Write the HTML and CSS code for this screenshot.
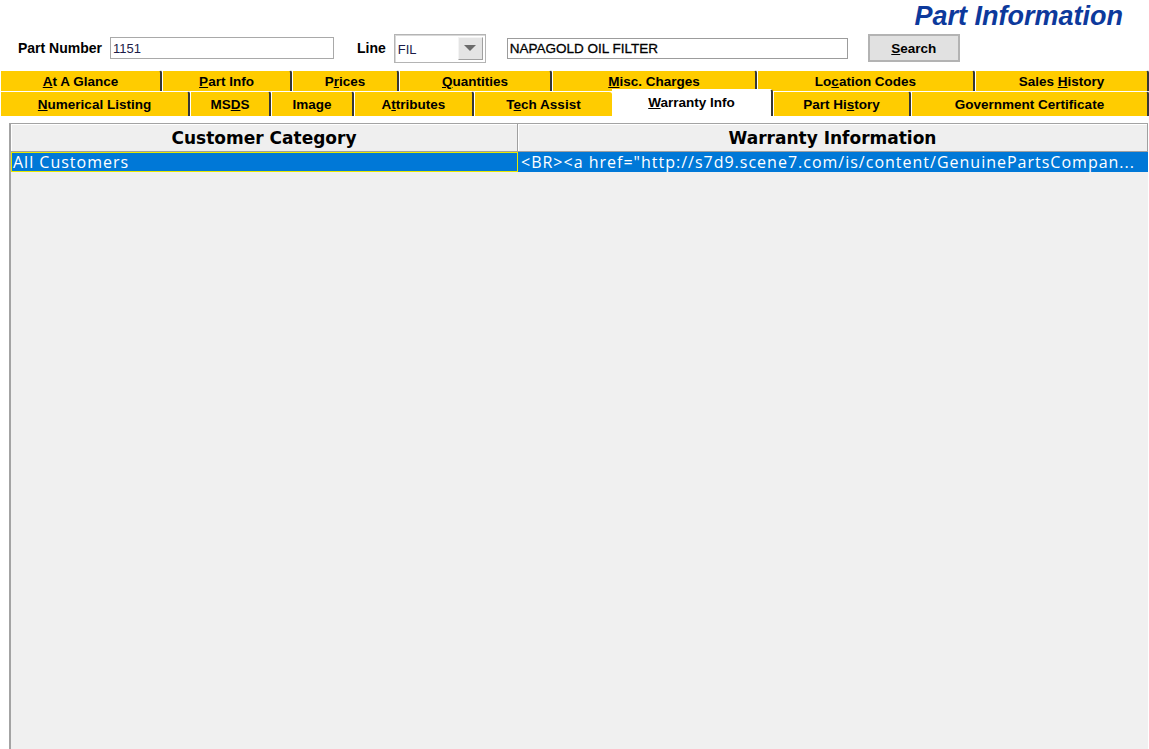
FILE: index.html
```html
<!DOCTYPE html>
<html>
<head>
<meta charset="utf-8">
<title>Part Information</title>
<link rel="stylesheet" href="styles.css">
</head>
<body>
<div class="page">
  <div class="title-row"><h1 class="title">Part Information</h1></div>
  <div class="form-row">
    <span class="lbl lbl-part">Part Number</span>
    <div class="field field-part">1151</div>
    <span class="lbl lbl-line">Line</span>
    <div class="select">
      <span class="select-val">FIL</span>
      <span class="select-btn"><svg width="12" height="7" viewBox="0 0 12 7"><path d="M0 0 L12 0 L6 6 Z" fill="#6b6b6b"/></svg></span>
    </div>
    <div class="field field-desc">NAPAGOLD OIL FILTER</div>
    <button class="btn"><u>S</u>earch</button>
  </div>
  <div class="tabs">
    <div class="tab-row row1">
      <div class="tab"><span><u>A</u>t A Glance</span></div>
      <div class="tab"><span><u>P</u>art Info</span></div>
      <div class="tab"><span>P<u>r</u>ices</span></div>
      <div class="tab"><span><u>Q</u>uantities</span></div>
      <div class="tab"><span><u>M</u>isc. Charges</span></div>
      <div class="tab"><span>Lo<u>c</u>ation Codes</span></div>
      <div class="tab"><span>Sales <u>H</u>istory</span></div>
    </div>
    <div class="tab-row row2">
      <div class="tab"><span><u>N</u>umerical Listing</span></div>
      <div class="tab"><span>MS<u>D</u>S</span></div>
      <div class="tab"><span>Ima<u>g</u>e</span></div>
      <div class="tab"><span>A<u>t</u>tributes</span></div>
      <div class="tab before-active"><span>T<u>e</u>ch Assist</span></div>
      <div class="tab active"><span><u>W</u>arranty Info</span></div>
      <div class="tab"><span>Part Hi<u>s</u>tory</span></div>
      <div class="tab"><span>Government Certificate</span></div>
    </div>
  </div>
  <div class="panel">
    <div class="grid">
      <div class="hcell">Customer Category</div>
      <div class="hcell">Warranty Information</div>
      <div class="cell sel focus">All Customers</div>
      <div class="cell sel link">&lt;BR&gt;&lt;a href="http://s7d9.scene7.com/is/content/GenuinePartsCompan...</div>
    </div>
  </div>
</div>
</body>
</html>
```
FILE: styles.css
```css
html, body {
  margin: 0;
  padding: 0;
  background: #ffffff;
  overflow: hidden;
}

.page {
  width: 1149px;
  height: 749px;
  overflow: hidden;
  font-family: "Liberation Sans", Arial, sans-serif;
}

.title-row {
  display: flex;
  justify-content: flex-end;
  height: 33px;
  padding-right: 26px;
  box-sizing: border-box;
}

.title {
  margin: 0;
  padding-top: 1px;
  font: italic bold 27px/30px "Liberation Sans", Arial, sans-serif;
  color: #0d399c;
}

.form-row {
  display: flex;
  align-items: center;
  height: 30px;
  padding-left: 18px;
}

.lbl {
  font-weight: bold;
  font-size: 14px;
  color: #000;
}

.lbl-part { margin-right: 8px; }
.lbl-line { margin-left: 23px; margin-right: 8px; }

.field {
  box-sizing: border-box;
  background: #fff;
  border: 1px solid #a9a9a9;
  font-size: 13px;
  padding-left: 2px;
  white-space: nowrap;
  overflow: hidden;
}

.field-part {
  width: 224px;
  height: 22px;
  line-height: 21px;
  color: #1c1c48;
}

.field-desc {
  margin-left: 21px;
  width: 341px;
  height: 21px;
  line-height: 19px;
  color: #000;
  border-color: #9c9c9c;
  font-size: 13.5px;
  -webkit-text-stroke: 0.3px #000;
}

.select {
  box-sizing: border-box;
  width: 92px;
  height: 29px;
  display: flex;
  align-items: stretch;
  background: #fff;
  border: 1px solid #b4b4b4;
  box-shadow: inset 1px 1px 0 #d8d8d8;
  padding: 2px 2px 2px 0;
}

.select-val {
  flex: 1;
  font-size: 13px;
  color: #1c1c48;
  padding-left: 3px;
  line-height: 26px;
}

.select-btn {
  box-sizing: border-box;
  width: 25px;
  display: flex;
  align-items: center;
  justify-content: center;
  background: #e4e4e4;
  border-left: 1px solid #f4f4f4;
  border-top: 1px solid #f4f4f4;
  border-right: 1px solid #a0a0a0;
  border-bottom: 1px solid #a0a0a0;
}

.btn {
  box-sizing: border-box;
  margin-left: 20px;
  width: 92px;
  height: 28px;
  padding: 0;
  background: #e1e1e1;
  border: 2px solid #b3b3b3;
  font: bold 13.5px "Liberation Sans", Arial, sans-serif;
  color: #000;
}

.tabs {
  margin-top: 7px;
}

.tab-row {
  display: grid;
}

.row1 {
  grid-template-columns: 162px 130px 107px 153px 205px 218px 174px;
  height: 21px;
}

.row2 {
  grid-template-columns: 190px 81px 83px 120px 138px 161px 138px 238px;
  height: 24px;
}

.tab {
  box-sizing: border-box;
  background: #ffcc00;
  border-top: 1px solid #fff;
  border-left: 1px solid #fff;
  border-right: 2px solid #363636;
  border-top-right-radius: 3px;
  display: flex;
  align-items: center;
  justify-content: center;
  font-weight: bold;
  font-size: 13.5px;
  color: #000;
  white-space: nowrap;
}

.tab.before-active {
  border-right: none;
}

.tab.active {
  position: relative;
  z-index: 1;
  background: #fff;
  margin-top: -2px;
  height: 27px;
  align-self: start;
  align-items: flex-start;
  padding-top: 5px;
  border-left: none;
  border-right: 2px solid #363636;
}

.panel {
  margin-top: 8px;
  margin-left: 9px;
  width: 1139px;
  height: 640px;
  box-sizing: border-box;
  background: #f0f0f0;
  border: 1px solid #a3a3a3;
  border-left: 2px solid #a3a3a3;
  border-right: none;
}

.grid {
  display: grid;
  grid-template-columns: 507px 630px;
  grid-template-rows: 28px 20px;
}

.hcell {
  box-sizing: border-box;
  background: #efefef;
  border-right: 1px solid #a0a0a0;
  border-bottom: 1px solid #a0a0a0;
  box-shadow: inset 1px 1px 0 #ffffff;
  text-align: center;
  font: bold 17px/28px "DejaVu Sans", Verdana, sans-serif;
  color: #000;
}

.cell {
  box-sizing: border-box;
  font-family: "Open Sans", sans-serif;
  font-size: 16px;
  letter-spacing: 1px;
  line-height: 18px;
  white-space: nowrap;
  overflow: hidden;
}

.sel {
  background: #0078d7;
  color: #fff;
}

.focus {
  border: 1px solid #e8e800;
  padding-left: 1px;
}

.link {
  padding-left: 3px;
  padding-top: 1px;
}
```
